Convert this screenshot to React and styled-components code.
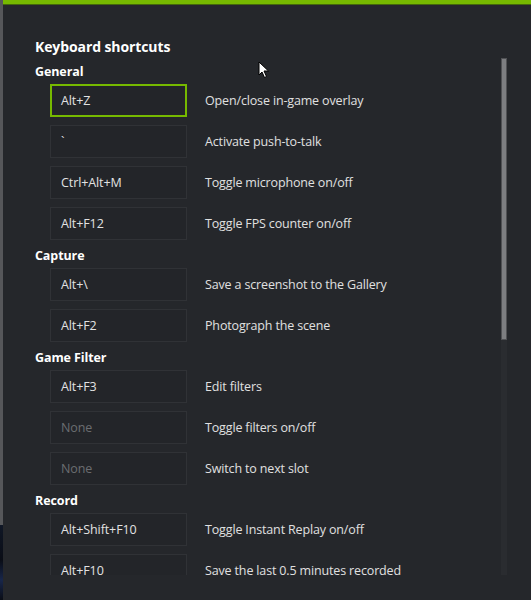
import React from "react";
import styled, { createGlobalStyle } from "styled-components";

const GlobalStyle = createGlobalStyle`
  html, body {
    margin: 0;
    padding: 0;
    background: #25272b;
  }
  body {
    font-family: "Open Sans", "Liberation Sans", sans-serif;
    -webkit-font-smoothing: antialiased;
  }
`;

const Frame = styled.div`
  position: relative;
  display: flex;
  width: 531px;
  height: 600px;
  overflow: hidden;
`;

const SideStrip = styled.div`
  width: 3px;
  flex: none;
  background: linear-gradient(
    to bottom,
    #56575a 0,
    #56575a 525px,
    #101726 525px,
    #0a0d16 560px,
    #18264a 580px,
    #0a0d16 600px
  );
`;

const Panel = styled.div`
  flex: 1;
  display: flex;
  flex-direction: column;
  background: #25272b;
`;

const TopBar = styled.div`
  height: 4px;
  background: #76b900;
  border-bottom: 1px solid #44680c;
  flex: none;
`;

const Body = styled.div`
  display: flex;
  padding: 32px 24px 0 32px;
`;

const Content = styled.div`
  flex: 1;
  height: 538px;
  overflow: hidden;
`;

const Title = styled.h1`
  margin: 0;
  font-size: 14px;
  line-height: 20px;
  font-weight: 700;
  color: #ffffff;
  letter-spacing: -0.1px;
`;

const Section = styled.section`
  margin-top: ${(p) => (p.$first ? "6px" : "7px")};
`;

const SectionTitle = styled.h2`
  margin: 0 0 3px;
  font-size: 12.5px;
  line-height: 18px;
  font-weight: 700;
  color: #ffffff;
  letter-spacing: -0.1px;
`;

const Rows = styled.div`
  display: flex;
  flex-direction: column;
  gap: 8px;
  padding-left: 15px;
`;

const Row = styled.div`
  display: flex;
  align-items: center;
  gap: 18px;
`;

const KeyBox = styled.div`
  box-sizing: border-box;
  width: 137px;
  height: 33px;
  flex: none;
  display: flex;
  align-items: center;
  padding-left: ${(p) => (p.$focused ? "9px" : "10px")};
  border: ${(p) => (p.$focused ? "2px solid #76b900" : "1px solid #303236")};
  background: #232529;
  font-size: 12.5px;
  color: ${(p) => (p.$empty ? "#6b6d71" : "#e2e2e2")};
  letter-spacing: -0.1px;
`;

const Action = styled.span`
  font-size: 12.5px;
  color: #e0e0e0;
  letter-spacing: -0.15px;
  white-space: nowrap;
`;

const ScrollTrack = styled.div`
  width: 6px;
  margin-top: 21px;
  height: 517px;
  flex: none;
  background: #2a2c30;
`;

const ScrollThumb = styled.div`
  height: 282px;
  box-sizing: border-box;
  background: #7d7e81;
  border: 1px solid #505154;
`;

const Cursor = styled.svg`
  position: absolute;
  left: 258px;
  top: 61px;
`;

const groups = [
  {
    name: "General",
    items: [
      { key: "Alt+Z", action: "Open/close in-game overlay", focused: true },
      { key: "`", action: "Activate push-to-talk" },
      { key: "Ctrl+Alt+M", action: "Toggle microphone on/off" },
      { key: "Alt+F12", action: "Toggle FPS counter on/off" },
    ],
  },
  {
    name: "Capture",
    items: [
      { key: "Alt+\\", action: "Save a screenshot to the Gallery" },
      { key: "Alt+F2", action: "Photograph the scene" },
    ],
  },
  {
    name: "Game Filter",
    items: [
      { key: "Alt+F3", action: "Edit filters" },
      { key: "None", action: "Toggle filters on/off", empty: true },
      { key: "None", action: "Switch to next slot", empty: true },
    ],
  },
  {
    name: "Record",
    items: [
      { key: "Alt+Shift+F10", action: "Toggle Instant Replay on/off" },
      { key: "Alt+F10", action: "Save the last 0.5 minutes recorded" },
    ],
  },
];

export default function App() {
  return (
    <>
      <GlobalStyle />
      <Frame>
        <SideStrip />
        <Panel>
          <TopBar />
          <Body>
            <Content>
              <Title>Keyboard shortcuts</Title>
              {groups.map((g, i) => (
                <Section key={g.name} $first={i === 0}>
                  <SectionTitle>{g.name}</SectionTitle>
                  <Rows>
                    {g.items.map((it) => (
                      <Row key={it.action}>
                        <KeyBox $focused={it.focused} $empty={it.empty}>
                          {it.key}
                        </KeyBox>
                        <Action>{it.action}</Action>
                      </Row>
                    ))}
                  </Rows>
                </Section>
              ))}
            </Content>
            <ScrollTrack>
              <ScrollThumb />
            </ScrollTrack>
          </Body>
        </Panel>
        <Cursor width="12" height="18" viewBox="0 0 12 18">
          <path
            d="M1 1 L1 14 L4 11 L6.5 16.5 L8.5 15.5 L6 10 L10.5 10 Z"
            fill="#ffffff"
            stroke="#000000"
            strokeWidth="1"
            strokeLinejoin="round"
          />
        </Cursor>
      </Frame>
    </>
  );
}
